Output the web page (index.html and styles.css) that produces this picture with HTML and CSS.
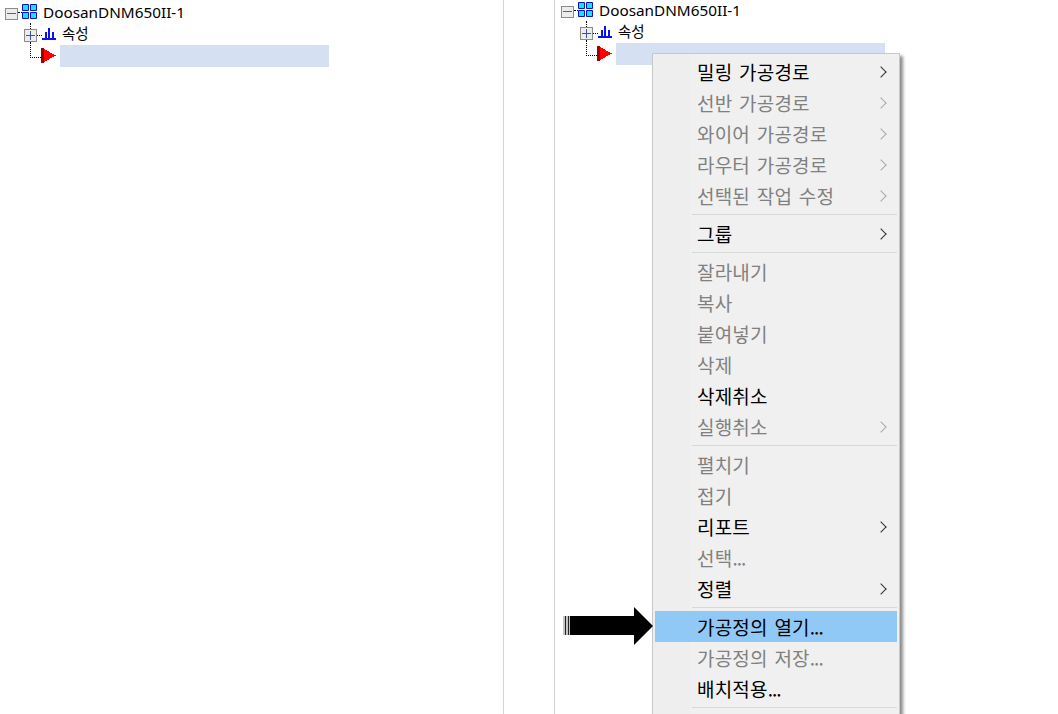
FILE: index.html
```html
<!DOCTYPE html>
<html lang="ko">
<head>
<meta charset="utf-8">
<title>가공정의</title>
<link rel="stylesheet" href="styles.css">
</head>
<body>
<svg class="defs" width="0" height="0" aria-hidden="true">
  <defs>
    <symbol id="minus" viewBox="0 0 13 12"><rect x="0.5" y="0.5" width="12" height="11" fill="#ececec" stroke="#8c8c8c"/><path d="M2 5.500h9" stroke="#4a62a8" fill="none"/></symbol>
    <symbol id="plus" viewBox="0 0 13 13"><rect x="0.5" y="0.5" width="12" height="12" fill="#ececec" stroke="#8c8c8c"/><path d="M2 6.500h9M6.500 2v9" stroke="#3a52a0" fill="none"/></symbol>
    <symbol id="grid" viewBox="0 0 15 15"><path d="M.5.500h6v6h-6zM8.500.500h6v6h-6zM.5 8.500h6v6h-6zM8.500 8.500h6v6h-6z" fill="#12e6f4" stroke="#0a12c0"/></symbol>
    <symbol id="bars" viewBox="0 0 14 12"><path d="M0 10h14v2H0zM3 4h2v6H3zM6 0h2v10H6zM10 4h2v6h-2z" fill="#0a12e8"/></symbol>
    <symbol id="flag" viewBox="0 0 15 15"><path d="M0 0h3v15H0z" fill="#a00000"/><path d="M3 1 15 7.500 3 14z" fill="#ff0000" shape-rendering="crispEdges"/></symbol>
  </defs>
</svg>
<main class="page">
  <section class="pane pane-left">
    <div class="tree">
      <div class="node root">
        <svg class="toggle-root"><use href="#minus"/></svg><span class="dot-h"></span>
        <svg class="icon-grid"><use href="#grid"/></svg>
        <span class="label-root">DoosanDNM650II-1</span>
      </div>
      <div class="node child">
        <svg class="toggle-child"><use href="#plus"/></svg><span class="dot-h short"></span>
        <svg class="icon-bars"><use href="#bars"/></svg>
        <span class="label-child">속성</span>
      </div>
      <div class="node leaf">
        <span class="elbow"></span>
        <svg class="icon-flag"><use href="#flag"/></svg>
        <span class="selection"></span>
      </div>
    </div>
  </section>
  <div class="divider-gap"></div>
  <section class="pane pane-right">
    <div class="tree">
      <div class="node root">
        <svg class="toggle-root"><use href="#minus"/></svg><span class="dot-h"></span>
        <svg class="icon-grid"><use href="#grid"/></svg>
        <span class="label-root">DoosanDNM650II-1</span>
      </div>
      <div class="node child">
        <svg class="toggle-child"><use href="#plus"/></svg><span class="dot-h short"></span>
        <svg class="icon-bars"><use href="#bars"/></svg>
        <span class="label-child">속성</span>
      </div>
      <div class="node leaf">
        <span class="elbow"></span>
        <svg class="icon-flag"><use href="#flag"/></svg>
        <span class="selection"></span>
      </div>
    </div>
  </section>
</main>

<nav class="menu">
  <div class="item has-sub">밀링 가공경로</div>
  <div class="item off has-sub">선반 가공경로</div>
  <div class="item off has-sub">와이어 가공경로</div>
  <div class="item off has-sub">라우터 가공경로</div>
  <div class="item off has-sub">선택된 작업 수정</div>
  <div class="sep"></div>
  <div class="item has-sub">그룹</div>
  <div class="sep"></div>
  <div class="item off">잘라내기</div>
  <div class="item off">복사</div>
  <div class="item off">붙여넣기</div>
  <div class="item off">삭제</div>
  <div class="item">삭제취소</div>
  <div class="item off has-sub">실행취소</div>
  <div class="sep"></div>
  <div class="item off">펼치기</div>
  <div class="item off">접기</div>
  <div class="item has-sub">리포트</div>
  <div class="item off">선택<span class="dots">...</span></div>
  <div class="item has-sub">정렬</div>
  <div class="sep"></div>
  <div class="item active">가공정의 열기<span class="dots">...</span></div>
  <div class="item off">가공정의 저장<span class="dots">...</span></div>
  <div class="item">배치적용<span class="dots">...</span></div>
  <div class="sep"></div>
</nav>

<svg class="pointer" viewBox="0 0 90 38" aria-hidden="true">
  <rect x="0" y="9" width="7" height="19" fill="#c4c4c4"/>
  <path d="M2.500 9v19M5.500 9v19" stroke="#222" stroke-width="1"/>
  <path d="M7 9h64V0l19 19-19 19V28H7z" fill="#000"/>
</svg>
</body>
</html>
```
FILE: styles.css
```css
html, body {
  margin: 0;
  padding: 0;
  width: 1058px;
  height: 714px;
  overflow: hidden;
  background: #fff;
}
.defs { position: absolute; }
.page {
  display: flex;
  height: 714px;
}
.pane-left {
  width: 504px;
  flex: none;
  box-sizing: border-box;
  border-right: 1px solid #d4d4d4;
  padding: 3px 0 0 5px;
}
.divider-gap {
  width: 51px;
  flex: none;
  box-sizing: border-box;
  border-right: 1px solid #d4d4d4;
}
.pane-right {
  flex: 1;
  padding: 1px 0 0 6px;
}
.tree {
  display: flex;
  flex-direction: column;
  color: #000;
}
.node {
  display: flex;
  align-items: flex-start;
  position: relative;
}
.root { height: 17px; }
.child { height: 19px; margin-top: 6px; padding-left: 19px; }
.leaf { height: 22px; padding-left: 36px; }
svg.toggle-root { width: 13px; height: 12px; flex: none; margin-top: 5px; }
svg.toggle-child { width: 13px; height: 13px; flex: none; margin-top: 3px; }
svg.icon-grid { width: 15px; height: 15px; flex: none; margin-top: 1px; }
svg.icon-bars { width: 14px; height: 12px; flex: none; margin-top: 2px; }
svg.icon-flag { width: 15px; height: 15px; flex: none; margin-top: 3px; }
.dot-h {
  width: 4px;
  margin-top: 9px;
  border-top: 1px dotted #000;
  flex: none;
}
.dot-h.short { width: 5px; }
.child::before {
  content: "";
  position: absolute;
  left: 25px;
  top: -3px;
  height: 6px;
  border-left: 1px dotted #000;
}
.elbow {
  position: absolute;
  left: 25px;
  top: -3px;
  width: 11px;
  height: 16px;
  box-sizing: border-box;
  border-left: 1px dotted #000;
  border-bottom: 1px dotted #000;
}
.label-root {
  font-family: "Noto Sans", "Liberation Sans", sans-serif;
  font-size: 15.300px;
  line-height: 17px;
  margin: 1px 0 0 6px;
}
.label-child {
  font-family: "Noto Sans CJK KR", sans-serif;
  font-size: 14.500px;
  line-height: 19px;
  margin: -3px 0 0 6px;
}
.selection {
  display: block;
  width: 269px;
  height: 22px;
  background: #d5e1f2;
  margin-left: 4px;
  flex: none;
}
.menu {
  position: absolute;
  left: 652px;
  top: 53px;
  width: 248px;
  height: 670px;
  box-sizing: border-box;
  background: linear-gradient(to right, #eeeeee 37px, #f0f0f0 37px);
  border: 1px solid #c8c8c8;
  padding: 2px;
  box-shadow: 3px 3px 3px rgba(0, 0, 0, 0.45);
  font-family: "Noto Sans CJK KR", sans-serif;
  font-size: 19px;
  letter-spacing: 0.2px;
  word-spacing: 1.200px;
  color: #000;
}
.item {
  height: 31px;
  line-height: 31px;
  padding-left: 42px;
  position: relative;
  white-space: nowrap;
}
.dots { letter-spacing: -1px; }
.off { color: #808080; }
.active { background: #90c8f6; }
.has-sub::after {
  content: "";
  position: absolute;
  left: 222px;
  top: 12px;
  width: 7px;
  height: 7px;
  border-top: 1.500px solid #333;
  border-right: 1.500px solid #333;
  transform: rotate(45deg);
}
.off.has-sub::after {
  border-color: #aaa;
}
.sep {
  height: 1px;
  margin: 3px 0 3px 37px;
  background: #d8d8d8;
}
.pointer {
  position: absolute;
  left: 563px;
  top: 607px;
  width: 90px;
  height: 38px;
}
```
